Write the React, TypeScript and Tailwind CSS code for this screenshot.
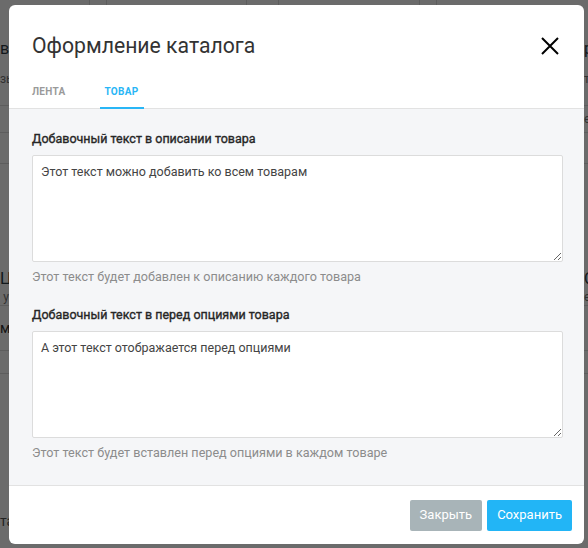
import React from 'react';

const font = { fontFamily: 'Roboto, "Noto Sans", Arial, sans-serif' };

const rows = [
  { h: 'h-[28px]', left: '', right: '', size: '', line: false },
  { h: 'h-[30px]', left: 'в', right: 'р', size: 'text-base text-[#2d3a44]', line: false },
  { h: 'h-[30px]', left: 'зы', right: 'т', size: 'text-xs text-[#777]', line: false },
  { h: 'h-[12px]', left: '', right: '', size: '', line: true },
  { h: 'h-[27px]', left: '', right: 'е', size: 'text-xs text-[#777]', line: true },
  { h: 'h-[31px]', left: '', right: '', size: '', line: true },
  { h: 'h-[104px]', left: '', right: '', size: '', line: false },
  { h: 'h-[21px]', left: 'Ц', right: 'С', size: 'text-base text-[#2d3a44]', line: false },
  { h: 'h-[17px]', left: 'у', right: 'е', size: 'text-xs text-[#777]', line: true },
  { h: 'h-[45px]', left: 'м', right: '', size: 'text-sm text-[#333]', line: true },
  { h: 'h-[23px]', left: '', right: '', size: '', line: true },
  { h: 'h-[137px]', left: '', right: '', size: '', line: false },
  { h: 'h-[20px]', left: 'та', right: '', size: 'text-sm text-[#555]', line: false },
];

const Field = ({ label, value, help }: { label: string; value: string; help: string }) => (
  <div className="flex flex-col">
    <label className="text-[12.5px] leading-4 font-normal text-[#262626] [-webkit-text-stroke:0.35px_#262626]">
      {label}
    </label>
    <textarea
      defaultValue={value}
      className="mt-[8px] h-[107px] w-full rounded-[2px] border border-[#dcdcdc] bg-white p-2 text-[12.5px] leading-4 text-[#444] outline-none"
      style={font}
    />
    <p className="mt-[7px] text-[12.6px] leading-4 text-[#8c8c8c]">{help}</p>
  </div>
);

export default function App() {
  return (
    <div className="relative h-[548px] w-[588px] overflow-hidden bg-white" style={font}>
      {/* page behind the dialog */}
      <div className="flex flex-col">
        <div className="flex h-[6px]">
          <div className="w-[90px] border-r border-[#ddd]" />
          <div className="w-[17px] border-r border-[#ddd]" />
          <div className="w-[140px] border-r border-[#ddd]" />
          <div className="w-[32px] border-r border-[#ddd]" />
          <div className="w-[141px] border-r border-[#ddd]" />
          <div className="w-[17px] border-r border-[#ddd]" />
        </div>
        {rows.map((r, i) => (
          <div
            key={i}
            className={`flex items-center justify-between ${r.h} ${r.line ? 'border-b border-[#ddd]' : ''} ${r.size}`}
          >
            <span className="w-[9px] overflow-hidden whitespace-nowrap text-right">{r.left}</span>
            <span className="w-[4px] overflow-hidden whitespace-nowrap">{r.right}</span>
          </div>
        ))}
      </div>
      <div className="absolute inset-0 bg-black/[0.58]" />

      {/* dialog */}
      <div className="absolute left-[9px] top-[5px] flex h-[539px] w-[575px] flex-col overflow-hidden rounded-[6px] bg-white">
        <div className="flex flex-col border-b border-[#e2e2e2]">
          <div className="flex items-center justify-between pl-[23px] pr-[25px] pt-[27px]">
            <h2 className="text-[21.2px] leading-7 font-normal text-[#333]">Оформление каталога</h2>
            <svg width="18" height="18" viewBox="0 0 18 18" className="text-black">
              <path d="M1 1L17 17M17 1L1 17" stroke="currentColor" strokeWidth="2" />
            </svg>
          </div>
          <div className="mt-[24px] flex gap-[29px] pl-[18px]">
            <div className="-mb-px border-b-2 border-transparent px-[5px] pb-[7px] text-[10px] leading-4 font-bold tracking-[0.3px] text-[#9a9a9a]">
              ЛЕНТА
            </div>
            <div className="-mb-px border-b-2 border-[#29b6f6] px-[5px] pb-[7px] text-[10px] leading-4 font-bold tracking-[0.3px] text-[#29b6f6]">
              ТОВАР
            </div>
          </div>
        </div>

        <div className="flex flex-1 flex-col gap-[22px] bg-[#f5f6f8] pl-[23px] pr-[21px] pt-[22px]">
          <Field
            label="Добавочный текст в описании товара"
            value="Этот текст можно добавить ко всем товарам"
            help="Этот текст будет добавлен к описанию каждого товара"
          />
          <Field
            label="Добавочный текст в перед опциями товара"
            value="А этот текст отображается перед опциями"
            help="Этот текст будет вставлен перед опциями в каждом товаре"
          />
        </div>

        <div className="flex h-[59px] items-center justify-end gap-[5px] border-t border-[#e2e2e2] pr-[12px]">
          <button className="h-[31px] rounded-[2px] bg-[#a8b4b8] px-[10px] text-[13px] text-white">Закрыть</button>
          <button className="h-[31px] rounded-[2px] bg-[#22b5f6] px-[10px] text-[13px] text-white">Сохранить</button>
        </div>
      </div>
    </div>
  );
}
